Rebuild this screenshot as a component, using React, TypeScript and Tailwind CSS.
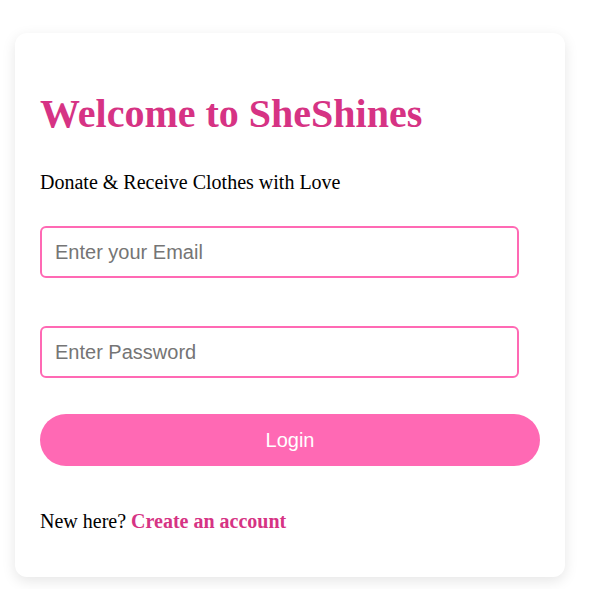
export default function App() {
  return (
    <div className="min-h-screen bg-white pt-[33px] pl-[15px]">
      <div className="w-[550px] rounded-[12px] bg-white px-[25px] pb-[44px] shadow-[0_4px_14px_rgba(0,0,0,0.1)] font-['Liberation_Serif',serif] text-[20px] text-black">
        <h1 className="pt-[58px] text-[40px] leading-[46px] font-bold text-[#d63384]">
          Welcome to SheShines
        </h1>
        <p className="mt-[34px] leading-[23px]">Donate &amp; Receive Clothes with Love</p>

        <input
          type="email"
          placeholder="Enter your Email"
          className="mt-[32px] block h-[52px] w-[479px] rounded-[6px] border-2 border-[#ff69b4] px-[13px] font-['Liberation_Sans',sans-serif] text-[20px] text-black placeholder:text-[#757575] outline-none"
        />
        <input
          type="password"
          placeholder="Enter Password"
          className="mt-[48px] block h-[52px] w-[479px] rounded-[6px] border-2 border-[#ff69b4] px-[13px] font-['Liberation_Sans',sans-serif] text-[20px] text-black placeholder:text-[#757575] outline-none"
        />
        <button className="mt-[36px] block h-[52px] w-[500px] rounded-full bg-[#ff69b4] font-['Liberation_Sans',sans-serif] text-[20px] text-white">
          Login
        </button>

        <p className="mt-[44px] leading-[23px]">
          New here?{" "}
          <a href="#" className="font-bold text-[#d63384]">
            Create an account
          </a>
        </p>
      </div>
    </div>
  );
}
